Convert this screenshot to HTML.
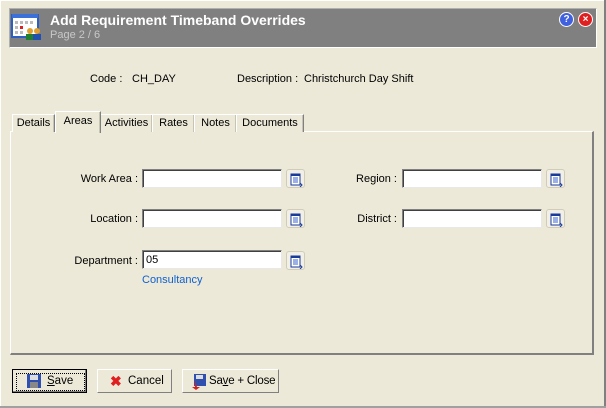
<!DOCTYPE html>
<html><head><style>
html,body{margin:0;width:606px;height:408px;overflow:hidden}
body{background:#ECE9D8;font-family:"Liberation Sans",sans-serif;font-size:11px;color:#000;position:relative;white-space:nowrap}
.a{position:absolute}
.hdr{left:9px;top:8px;width:586px;height:38px;background:#808080;border:1px solid #fff;border-left-color:#b0b0b0;border-top-color:#b0b0b0}
.tab{position:absolute;top:114px;height:17px;border:1px solid #fff;border-right:1px solid #808080;border-bottom:none;background:#ECE9D8;text-align:center;line-height:17px;box-shadow:inset -1px 0 #c8c4b4}
.panel{left:10px;top:131px;width:584px;height:224px;border:1px solid #fff;border-right:2px solid #808080;border-bottom:2px solid #808080;box-sizing:border-box}
.inp{position:absolute;height:19px;background:#fff;border:1px solid #808080;border-right-color:#e8e8e8;border-bottom-color:#e8e8e8;box-sizing:border-box;box-shadow:inset 1px 1px #404040;padding:2px 3px;font-size:11px}
.lb{position:absolute;text-align:right;width:120px}
.bt{position:absolute;width:19px;height:19px;border-radius:3px;background:#f2f0e6;border:1px solid #d0ccb8;box-sizing:border-box}
.btn{position:absolute;top:369px;height:24px;border:1px solid #fff;border-right-color:#808080;border-bottom-color:#808080;box-sizing:border-box;background:#ECE9D8;line-height:22px;font-size:11.5px}
</style></head><body>
<div class="a" style="left:0;top:0;width:606px;height:1px;background:#fff"></div>
<div class="a" style="left:0;top:0;width:1px;height:408px;background:#fff"></div>
<div class="a" style="right:0;top:0;width:2px;height:408px;background:#808080"></div>
<div class="a" style="left:0;top:406px;width:606px;height:2px;background:#a0a0a0"></div>
<div class="a hdr"></div>
<svg class="a" style="left:11px;top:12px" width="34" height="30"><rect x="1" y="3" width="26" height="22" fill="#fff" stroke="#2b5fc4" stroke-width="2"/><rect x="1" y="2" width="26" height="4" fill="#3a70d8"/><g fill="#bbb"><rect x="4" y="9" width="3" height="3"/><rect x="9" y="9" width="3" height="3"/><rect x="14" y="9" width="3" height="3"/><rect x="19" y="9" width="3" height="3"/><rect x="4" y="14" width="3" height="3"/><rect x="4" y="19" width="3" height="3"/><rect x="9" y="19" width="3" height="3"/></g><rect x="9" y="14" width="3" height="3" fill="#e02020"/><circle cx="19" cy="19" r="3" fill="#e0a030"/><rect x="15" y="22" width="7" height="6" fill="#208030"/><circle cx="26" cy="19" r="3" fill="#e0a030"/><rect x="22" y="22" width="8" height="6" fill="#2050b0"/></svg>
<div class="a" style="left:50px;top:12px;color:#fff;font-weight:bold;font-size:14px">Add Requirement Timeband Overrides</div>
<div class="a" style="left:50px;top:29px;color:#c8c8c8;font-size:11px">Page 2 / 6</div>
<div class="a" style="left:559px;top:12px;width:13px;height:13px;border-radius:50%;background:#4060e0;border:1px solid #fff;color:#fff;font-weight:bold;font-size:10px;text-align:center;line-height:13px">?</div>
<div class="a" style="left:578px;top:12px;width:13px;height:13px;border-radius:50%;background:#e02020;border:1px solid #fff;color:#fff;font-weight:bold;font-size:10px;text-align:center;line-height:13px">×</div>
<div class="a" style="left:90px;top:73px">Code :</div>
<div class="a" style="left:132px;top:73px">CH_DAY</div>
<div class="a" style="left:237px;top:73px">Description :</div>
<div class="a" style="left:304px;top:73px">Christchurch Day Shift</div>
<div class="a panel"></div>
<div class="tab" style="left:12px;width:41px">Details</div>
<div class="tab" style="left:55px;width:44px;top:111px;height:21px;line-height:19px;z-index:2">Areas</div>
<div class="tab" style="left:100px;width:51px">Activities</div>
<div class="tab" style="left:152px;width:41px">Rates</div>
<div class="tab" style="left:194px;width:41px">Notes</div>
<div class="tab" style="left:236px;width:66px">Documents</div>

<div class="lb" style="left:18px;top:173px">Work Area :</div>
<div class="inp" style="left:142px;top:169px;width:140px"></div>
<div class="lb" style="left:18px;top:213px">Location :</div>
<div class="inp" style="left:142px;top:209px;width:140px"></div>
<div class="lb" style="left:18px;top:255px">Department :</div>
<div class="inp" style="left:142px;top:250px;width:140px;padding-top:3px">05</div>
<div class="a" style="left:142px;top:274px;color:#1060d0">Consultancy</div>
<div class="lb" style="left:277px;top:173px">Region :</div>
<div class="inp" style="left:402px;top:169px;width:140px"></div>
<div class="lb" style="left:277px;top:213px">District :</div>
<div class="inp" style="left:402px;top:209px;width:140px"></div>

<svg width="0" height="0" style="position:absolute"><defs><g id="ic"><rect x="4" y="4" width="9" height="11" fill="#fff" stroke="#1a3a9a"/><rect x="4" y="4" width="9" height="2" fill="#1a3a9a"/><path d="M6 8h5M6 10h5M6 12h5" stroke="#3a60d0"/><path d="M13 13l2 2-2 2" stroke="#1a3a9a" fill="none"/></g></defs></svg>
<svg class="bt" style="left:286px;top:169px"><use href="#ic"/></svg>
<svg class="bt" style="left:286px;top:209px"><use href="#ic"/></svg>
<svg class="bt" style="left:286px;top:251px"><use href="#ic"/></svg>
<svg class="bt" style="left:546px;top:169px"><use href="#ic"/></svg>
<svg class="bt" style="left:546px;top:209px"><use href="#ic"/></svg>

<div class="btn" style="left:12px;width:75px;border:1px solid #000;box-shadow:inset -1px -1px #808080">
<div class="a" style="left:3px;top:3px;width:67px;height:16px;border:1px dotted #000"></div>
<svg class="a" style="left:14px;top:4px" width="14" height="14"><rect x="0" y="0" width="14" height="14" fill="#3050b0"/><rect x="3" y="1" width="8" height="5" fill="#ddd"/><rect x="3" y="8" width="8" height="6" fill="#888"/></svg>
<span class="a" style="left:34px;top:0"><u>S</u>ave</span></div>
<div class="btn" style="left:97px;width:75px"><span class="a" style="left:12px;top:0;color:#e02020;font-weight:bold;font-size:14px">✖</span><span class="a" style="left:30px;top:0">Cancel</span></div>
<div class="btn" style="left:182px;width:97px"><svg class="a" style="left:8px;top:4px" width="16" height="16"><rect x="3" y="0" width="12" height="12" fill="#3050b0"/><rect x="5" y="1" width="7" height="4" fill="#ddd"/><path d="M4 6v7H1l4 3 4-3H6" fill="#d02020"/></svg><span class="a" style="left:26px;top:0;letter-spacing:-0.2px">Sa<u>v</u>e + Close</span></div>
</body></html>
